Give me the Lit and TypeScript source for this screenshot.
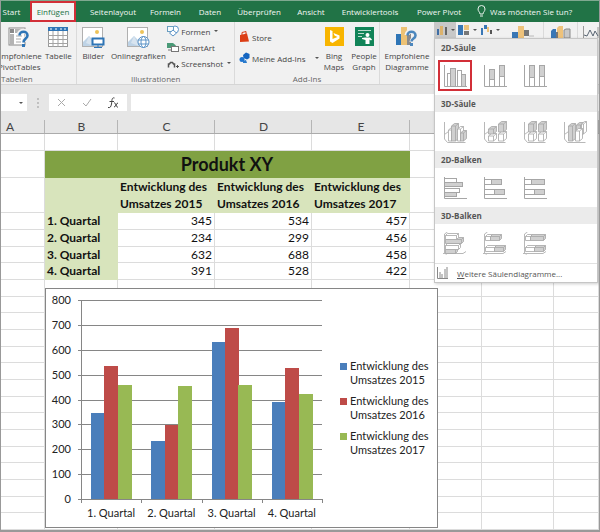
import { LitElement, html, svg, css, nothing } from "lit";
import { customElement } from "lit/decorators.js";

const TABS = ["Start", "Einfügen", "Seitenlayout", "Formeln", "Daten", "Überprüfen", "Ansicht", "Entwicklertools", "Power Pivot"];

const QUARTERS = ["1. Quartal", "2. Quartal", "3. Quartal", "4. Quartal"];
const SERIES = [
  { year: 2015, color: "#4a7ebb", values: [345, 234, 632, 391] },
  { year: 2016, color: "#be4b48", values: [534, 299, 688, 528] },
  { year: 2017, color: "#98b954", values: [457, 456, 458, 422] },
];

const icon = (w: number, h: number, body: unknown) =>
  html`<svg class="icon" width=${w} height=${h} viewBox="0 0 ${w} ${h}" aria-hidden="true">${body}</svg>`;

const pivotIcon = icon(22, 22, svg`
  <rect x="1" y="2" width="16" height="17" fill="#fff" stroke="#8a8a8a"/>
  <rect x="2" y="3" width="4" height="4" fill="#8a8a8a"/><rect x="7" y="3" width="10" height="4" fill="#b4b4b4"/>
  <rect x="2" y="8" width="4" height="11" fill="#b4b4b4"/>
  <path d="M8 10h6M8 13h5M8 16h5" stroke="#aaa"/>
  <path d="M11 9c0-5 9-5 9 0 0 4-4 3-4 7" fill="none" stroke="#f1f1f1" stroke-width="5"/>
  <path d="M11.500 9.500c0-5 8-5 8 0 0 3-4 3-4 7" fill="none" stroke="#2e75b6" stroke-width="2.600"/>
  <rect x="14" y="18" width="3" height="3" fill="#2e75b6"/>`);

const tableIcon = icon(22, 22, svg`
  <rect x="1.500" y="1.500" width="19" height="19" fill="#fff" stroke="#999"/>
  <rect x="1" y="1" width="20" height="4" fill="#2e75b6"/>
  <path d="M6 5v16M11 5v16M16 5v16M1 9.500h20M1 13.500h20M1 17.500h20" stroke="#a3a3a3"/>
  <path d="M3 3h2M8 3h2M13 3h2M17 3h2" stroke="#fff"/>`);

const pictureBase = svg`
  <rect x="1.500" y="1.500" width="20" height="19" fill="#fff" stroke="#b0b0b0"/>
  <circle cx="16" cy="6" r="2" fill="#edc35a"/>
  <path d="M2 20v-4l6-6 5 5v5z" fill="#bed3e6"/><path d="M8 10l-3 7 8 3z" fill="#d8e4ef"/>`;
const pictureIcon = icon(24, 22, svg`${pictureBase}
  <rect x="11.500" y="12.500" width="11" height="6" fill="#fff" stroke="#2e75b6" stroke-width="2"/>
  <path d="M17 19v2M13 21.500h8" stroke="#2e75b6"/>`);
const onlineIcon = icon(24, 22, svg`${pictureBase}
  <circle cx="17.500" cy="16" r="5.500" fill="#fff" stroke="#5b93c7"/>
  <ellipse cx="17.500" cy="16" rx="2.500" ry="5.500" fill="none" stroke="#5b93c7"/>
  <path d="M12.500 14h10M12.500 18h10" stroke="#5b93c7"/>`);

const shapesIcon = icon(12, 12, svg`
  <circle cx="8" cy="4.500" r="3.500" fill="#fff" stroke="#5b93c7"/>
  <rect x=".5" y="1.500" width="6" height="5" fill="#f8fbfd" stroke="#6a9ec0"/>
  <path d="M2.500 8l3.500-3 3.500 3-3.500 3z" fill="#fff" stroke="#5b93c7"/>`);
const smartIcon = icon(12, 12, svg`
  <path d="M0 2h6l3 2.500-3 2.500H0z" fill="#4a9a77"/><rect x="4.500" y="5.500" width="7" height="5" fill="#fff" stroke="#777"/>
  <path d="M1 9h3" stroke="#777"/>`);
const shotIcon = icon(12, 12, svg`
  <path d="M1.500 10.500V7h1L3.500 5.500h2L6.500 7h1v3.500" fill="none" stroke="#555" stroke-width="1.500"/>
  <path d="M9 9.500h3M10.500 8v3" stroke="#555"/>`);

const storeIcon = icon(11, 12, svg`
  <path d="M1 4l7-1.500 2 8L1 11z" fill="#dc3e15"/><path d="M3 4V1.500l4-1V3" fill="none" stroke="#dc3e15"/>`);
const addinIcon = icon(11, 12, svg`
  <path d="M4 3l3-2.500L10.500 2v4L8 7.500 4.500 6z" fill="#1565c0"/><circle cx="3" cy="7.500" r="2.500" fill="#1e74d0"/>
  <path d="M4 9l3-1 1 3H4z" fill="#2a7bcb"/>`);

const bingIcon = icon(19, 22, svg`
  <rect y="1" width="19" height="19" fill="#f8b500"/><path d="M5 4l2.500 1v8l5-2-3-1.500L8.500 7l6 2.500v3L7.500 17 5 15.500z" fill="#fff"/>`);
const peopleIcon = icon(19, 22, svg`
  <rect y="1" width="19" height="19" fill="#118458"/><path d="M3 4.500h13M3 7.500h6M3 10.500h4" stroke="#b9dccd"/>
  <circle cx="12.500" cy="9" r="2" fill="#fff"/><path d="M7 12l3-.5h5l2 2-1 1-1.500-1V18h-4v-4L7 13z" fill="#fff"/>`);

const recommendIcon = icon(22, 22, svg`
  <rect x="0" y="8" width="5" height="11" fill="#2e75b6"/><rect x="5" y="1" width="6" height="18" fill="#edc274"/>
  <rect x="11" y="5" width="4" height="14" fill="#8a8a8a"/>
  <path d="M11 9c0-5 9-5 9 0 0 4-4 3-4 7" fill="none" stroke="#f1f1f1" stroke-width="5"/>
  <path d="M11.500 9.500c0-5 8-5 8 0 0 3-4 3-4 6" fill="none" stroke="#4c87bd" stroke-width="2.600"/>
  <rect x="14" y="17" width="3" height="3" fill="#4c87bd"/>`);

const columnIcon = icon(12, 10, svg`<rect x="1" y="4" width="2" height="6" fill="#3f6ea5"/><rect x="4" y="1" width="3" height="9" fill="#dcb26c"/><rect x="9" y="2" width="2" height="8" fill="#666"/>`);
const treeIcon = icon(12, 10, svg`<rect width="5" height="10" fill="#3a77b5"/><rect x="6" width="5" height="5" fill="#eec27b"/><rect x="6" y="6" width="5" height="4" fill="#777"/>`);
const fallIcon = icon(12, 10, svg`<rect x="0" y="3" width="2" height="7" fill="#3a77b5"/><rect x="3" y="0" width="3" height="4" fill="#3a77b5"/><rect x="6" y="2" width="2" height="5" fill="#eec27b"/><rect x="9" y="5" width="2" height="4" fill="#555"/>`);
const mapsIcon = icon(22, 12, svg`<rect x="0" y="6" width="6" height="6" fill="#3a77b5"/><rect x="6" y="0" width="6" height="12" fill="#eec27b"/><rect x="12" y="4" width="5" height="6" fill="#777"/><path d="M17 10h5" stroke="#bbb"/>`);
const pivotChartIcon = icon(22, 12, svg`<path d="M1 12V5l2-2h3v9z" fill="#3a77b5"/><path d="M7 12V2l2-2h4v12z" fill="#eec27b"/><path d="M14 12V4l2-1h4v9z" fill="#c8c8c8" stroke="#8a8a8a"/><path d="M6 6h2v6H6z" fill="#777"/>`);
const lineIcon = icon(16, 12, svg`<path d="M.5 0v12M15 1v11" stroke="#999"/><path d="M1 9l3 1 3-6 3 6 2-5 3 5" fill="none" stroke="#596573"/>`);

const G = "#a6a6a6";
const FILL = "#d0d0d0";
const axes = svg`<path d="M1.500 1v21.500H24" fill="none" stroke=${G}/>`;
const box = (x: number, y: number, w: number, h: number, fill: string) =>
  svg`<rect x=${x + 0.5} y=${y + 0.5} width=${w} height=${h} fill=${fill} stroke=${G}/>`;
const vPrism = (x: number, y: number, w: number, bottom: number, fill: string) => svg`
  <path d="M${x + 0.5} ${y + 3}l3-2.500h${w}v${bottom - y - 3}l-3 2.500h${-w}z" fill=${fill} stroke=${G} stroke-width=".8"/>
  <path d="M${x + 0.5} ${y + 3}h${w}v${bottom - y - 3}M${x + w + 0.5} ${y + 3}l3-2.500" fill="none" stroke=${G} stroke-width=".8"/>`;
const hPrism = (x: number, y: number, w: number, fill: string) => svg`
  <path d="M${x + 0.5} ${y + 2.5}l2-2h${w}v4l-2 2h${-w}z" fill=${fill} stroke=${G} stroke-width=".8"/>
  <path d="M${x + 0.5} ${y + 2.5}h${w}v4M${x + w + 0.5} ${y + 2.5}l2-2" fill="none" stroke=${G} stroke-width=".8"/>`;
const axes3d = svg`<path d="M1.500 2v17M1.500 14.500l4-3M1.500 19l3 3.500h18" fill="none" stroke="#b8b8b8"/>`;
const axes3dBar = svg`<path d="M1.500 2v19l2 1.500M0 21.500h20l3-2M1.500 2l3-2" fill="none" stroke="#b8b8b8"/>`;

const chartIcon = (body: unknown) => icon(24, 24, body);

const GALLERY = [
  {
    title: "2D-Säule",
    items: [
      ["Gruppierte Säulen", chartIcon(svg`${axes}${box(4, 9, 3, 13, "#fff")}${box(7, 4, 5, 18, FILL)}${box(14, 6, 4, 16, "#fff")}${box(18, 10, 4, 12, FILL)}`)],
      ["Gestapelte Säulen", chartIcon(svg`${axes}${box(6, 14, 5, 8, "#fff")}${box(6, 5, 5, 10, FILL)}${box(16, 12, 5, 10, "#fff")}${box(16, 1, 5, 11, FILL)}`)],
      ["Gestapelte Säulen (100%)", chartIcon(svg`${axes}${box(6, 12, 5, 10, "#fff")}${box(6, 1, 5, 12, FILL)}${box(16, 12, 5, 10, "#fff")}${box(16, 1, 5, 11, FILL)}`)],
    ],
  },
  {
    title: "3D-Säule",
    items: [
      ["Gruppierte 3D-Säulen", chartIcon(svg`${axes3d}${vPrism(5, 7, 3, 21, "#fff")}${vPrism(8, 3, 4, 21, FILL)}${vPrism(14, 6, 3, 21, "#fff")}${vPrism(17, 10, 3, 21, FILL)}`)],
      ["Gestapelte 3D-Säulen", chartIcon(svg`${axes3d}${vPrism(5, 13, 5, 21, "#fff")}${vPrism(5, 6, 5, 14, FILL)}${vPrism(15, 11, 5, 21, "#fff")}${vPrism(15, 1, 5, 12, FILL)}`)],
      ["Gestapelte 3D-Säulen (100%)", chartIcon(svg`${axes3d}${vPrism(5, 11, 5, 21, "#fff")}${vPrism(5, 1, 5, 12, FILL)}${vPrism(15, 11, 5, 21, "#fff")}${vPrism(15, 1, 5, 12, FILL)}`)],
      ["3D-Säulen", chartIcon(svg`${axes3d}${vPrism(13, 2, 4, 16, FILL)}${vPrism(18, 1, 2, 14, "#fff")}${vPrism(5, 3, 4, 21, FILL)}${vPrism(12, 8, 4, 21, "#fff")}`)],
    ],
  },
  {
    title: "2D-Balken",
    items: [
      ["Gruppierte Balken", chartIcon(svg`${axes}${box(1, 2, 12, 4, "#fff")}${box(1, 6, 18, 4, FILL)}${box(1, 12, 15, 4, "#fff")}${box(1, 16, 12, 4, FILL)}`)],
      ["Gestapelte Balken", chartIcon(svg`${axes}${box(1, 3, 7, 5, "#fff")}${box(8, 3, 10, 5, FILL)}${box(1, 13, 10, 5, "#fff")}${box(11, 13, 10, 5, FILL)}`)],
      ["Gestapelte Balken (100%)", chartIcon(svg`${axes}${box(1, 3, 7, 5, "#fff")}${box(8, 3, 13, 5, FILL)}${box(1, 13, 10, 5, "#fff")}${box(11, 13, 10, 5, FILL)}`)],
    ],
  },
  {
    title: "3D-Balken",
    items: [
      ["Gruppierte 3D-Balken", chartIcon(svg`${axes3dBar}${hPrism(2, 15, 10, FILL)}${hPrism(2, 11, 13, "#fff")}${hPrism(2, 5, 16, FILL)}${hPrism(2, 1, 11, "#fff")}`)],
      ["Gestapelte 3D-Balken", chartIcon(svg`${axes3dBar}${hPrism(2, 2, 5, "#fff")}${hPrism(7, 2, 9, FILL)}${hPrism(2, 13, 9, "#fff")}${hPrism(11, 13, 9, FILL)}`)],
      ["Gestapelte 3D-Balken (100%)", chartIcon(svg`${axes3dBar}${hPrism(2, 2, 5, "#fff")}${hPrism(7, 2, 13, FILL)}${hPrism(2, 13, 9, "#fff")}${hPrism(11, 13, 9, FILL)}`)],
    ],
  },
] as const;

@customElement("chart-gallery")
export class ChartGallery extends LitElement {
  static styles = css`
    :host { display: block; box-sizing: border-box; background: #fff; border: 1px solid #c6c6c6; box-shadow: 1px 1px 3px #0003; }
    h2 { margin: 0; height: 17px; line-height: 17px; padding-left: 6px; background: #ebebeb; color: #555; font-size: 8px; font-weight: 700; }
    .row { display: flex; gap: 6px; height: 31px; padding: 4px 3px; }
    .item { width: 34px; height: 31px; box-sizing: border-box; display: grid; place-items: center; padding: 0; border: 0; background: none; }
    .item.selected { border: 2px solid #d22f38; }
    .icon { display: block; }
    .more { display: flex; align-items: center; gap: 9px; width: 100%; height: 19px; padding: 0 2px; border: 0; border-top: 1px solid #e1e1e1; background: none; font: inherit; font-size: 8px; color: #555; }
  `;

  render() {
    return html`
      ${GALLERY.map((group, g) => html`
        <h2>${group.title}</h2>
        <div class="row">
          ${group.items.map(([name, picture], i) => html`
            <button class="item ${g + i === 0 ? "selected" : ""}" aria-label=${name}>${picture}</button>`)}
        </div>`)}
      <button class="more">
        ${icon(11, 12, svg`<path d="M.5 0v11.500H11" fill="none" stroke="#888"/><path d="M3 5v6M5 7v4M8 2v9M10 0v11" stroke="#888"/>`)}
        <span><u>W</u>eitere Säulendiagramme...</span>
      </button>`;
  }
}

@customElement("sales-chart")
export class SalesChart extends LitElement {
  static styles = css`
    :host { display: flex; align-items: center; box-sizing: border-box; background: #fff; border: 1px solid #868686; font-family: Lato, "Liberation Sans", sans-serif; font-size: 11px; color: #222; }
    .plot { display: block; flex: none; }
    .plot text { font-size: 11px; fill: #222; }
    .line { stroke: #868686; }
    ul { list-style: none; margin: 0 0 0 14px; padding: 0; display: grid; gap: 7px; }
    li { display: flex; gap: 3px; line-height: 14px; }
    .key { flex: none; width: 7px; height: 7px; margin-top: 4px; }
  `;

  render() {
    const left = 35, right = 276, top = 11, bottom = 210;
    const y = (v: number) => Math.round(bottom - (v / 800) * (bottom - top));
    const step = (right - left) / QUARTERS.length;
    return html`
      <svg class="plot" width="280" height="238" viewBox="0 0 280 238" role="img" aria-label="Säulendiagramm Produkt XY">
        ${[0, 100, 200, 300, 400, 500, 600, 700, 800].map((v) => svg`
          <path class="line" d="M${left - 3} ${y(v) + 0.5}H${right}"/>
          <text x="25" y=${y(v) + 4} text-anchor="end">${v}</text>`)}
        ${QUARTERS.map((q, i) => svg`
          ${SERIES.map((s, k) => svg`<rect x=${Math.round(left + i * step + 10 + k * 13.4)} y=${y(s.values[i])} width="14" height=${bottom - y(s.values[i])} fill=${s.color}/>`)}
          <path class="line" d="M${Math.round(left + (i + 1) * step) + 0.5} ${bottom}v4"/>
          <text x=${left + (i + 0.5) * step} y="228" text-anchor="middle">${q}</text>`)}
        <path class="line" d="M${left + 0.5} ${top}V${bottom + 4}"/>
      </svg>
      <ul>
        ${SERIES.map((s) => html`
          <li><span class="key" style="background:${s.color}"></span><span>Entwicklung des<br />${`Umsatzes ${s.year}`}</span></li>`)}
      </ul>`;
  }
}

@customElement("app-root")
export class AppRoot extends LitElement {
  static styles = css`
    :host { display: block; font-family: "Open Sans", "Noto Sans", sans-serif; font-size: 8px; color: #444; }
    .frame { display: flex; flex-direction: column; box-sizing: border-box; min-height: 100vh; border: 1px solid #999; border-top-color: #7fa990; border-bottom-width: 2px; overflow: hidden; background: #fff; }
    button { font: inherit; color: inherit; background: none; border: 0; padding: 0; margin: 0; }
    .icon { display: block; flex: none; }

    .tabs { display: grid; grid-template-columns: 21px 62px 58px 47px 42px 56px 48px 70px 68px 1fr; align-items: center; height: 21px; background: #217346; }
    .tab { color: #f1f7f3; text-align: center; line-height: 17px; height: 21px; white-space: nowrap; }
    .tab.active { justify-self: center; width: 46px; box-sizing: border-box; background: #f5f5f5; border: 2px solid #d22f38; color: #217346; }
    .tell { display: flex; align-items: center; gap: 4px; padding-left: 4px; color: #f1f7f3; }

    .ribbon { display: flex; height: 63px; background: #f1f1f1; border-bottom: 1px solid #d5d5d5; box-sizing: border-box; }
    .group { display: flex; flex-direction: column; box-sizing: border-box; border-right: 1px solid #dadada; padding-bottom: 1px; }
    .body { display: flex; flex: 1; min-height: 0; }
    .caption { height: 8px; line-height: 8px; text-align: center; color: #666; }
    .tables { width: 77px; overflow: hidden; }
    .tables .body { justify-content: flex-end; padding-right: 2px; }
    .tables .caption { text-align: left; }
    .illus { width: 159px; }
    .addins { width: 145px; }
    .recommend { border-right: 0; width: 54px; }
    .big { display: flex; flex: none; flex-direction: column; align-items: center; gap: 2px; padding-top: 4px; line-height: 11px; white-space: nowrap; }
    .w22 { width: 32px; } .w30 { width: 30px; } .w46 { width: 46px; } .w54 { width: 54px; } .w58 { width: 58px; }
    .stack { display: flex; flex-direction: column; gap: 4px; padding-top: 3px; }
    .addins .stack { gap: 9px; padding: 9px 0 0 4px; width: 81px; }
    .small { display: flex; align-items: center; gap: 2px; height: 12px; white-space: nowrap; }
    .caret { width: 0; height: 0; border: 2px solid transparent; border-top-color: #555; border-bottom: 0; margin-left: 2px; }
    .push { margin-left: 7px; }

    .charts { display: flex; align-items: flex-start; flex: 1; }
    .anchor { position: relative; }
    .mini { display: flex; align-items: center; gap: 1px; height: 16px; padding: 0 2px; }
    .mini.open { background: #c8c8c8; width: 22px; box-sizing: border-box; }
    chart-gallery { position: absolute; top: 100%; left: 0; width: 164px; z-index: 2; }
    .wide { padding: 4px 0 0 10px; }
    .cell { border-left: 1px solid #dadada; height: 56px; margin-left: 9px; padding: 4px 0 40px 6px; }
    .spark { border-left: 1px solid #dadada; height: 56px; margin-left: 5px; padding: 4px 0 40px 5px; }

    .formula { display: flex; align-items: center; height: 27px; padding-top: 8px; box-sizing: border-box; background: #e6e6e6; }
    .box { display: flex; align-items: center; height: 17px; background: #fff; }
    .name { width: 26px; justify-content: flex-end; }
    .name .caret { margin-right: 4px; }
    .dots { width: 22px; display: flex; justify-content: center; }
    .tools { width: 78px; margin-right: 4px; justify-content: space-around; }
    .input { flex: 1; min-width: 0; border: 0; padding: 0 4px; font: inherit; }

    .sheet { position: relative; flex: 1; }
    table { width: 100%; table-layout: fixed; border-collapse: separate; border-spacing: 0; font-family: Lato, "Liberation Sans", sans-serif; font-size: 12px; color: #111; }
    th, td { box-sizing: border-box; padding: 0 2px; border: 0 solid #dcdcdc; border-width: 0 1px 1px 0; height: 17px; line-height: 16px; overflow: hidden; white-space: nowrap; }
    td { text-align: right; }
    th { text-align: left; font-weight: 700; }
    .letters th { height: 22px; background: linear-gradient(#b5b5b5, #b5b5b5) right bottom / 1px 13px no-repeat #e6e6e6; border-width: 0 0 1px 0; border-color: #ababab; padding: 8px 0 0; text-align: center; font-weight: 400; line-height: 12px; color: #444; }
    .letters .first { text-align: left; padding-left: 5px; }
    .title { height: 27px; }
    .title .head { height: 27px; background: #80a143; border-color: #80a143; text-align: center; font-size: 18px; line-height: 26px; }
    .years .green { height: 35px; white-space: normal; line-height: 17px; }
    .green { background: #d8e4bc; border-color: #d8e4bc; }
    .short td, .short th { height: 16px; line-height: 15px; }
    .c-a { width: 44px; } .c-b { width: 73px; } .c-m { width: 97px; } .c-e { width: 98px; } .c-f { width: 72px; }
    sales-chart { position: absolute; left: 44px; top: 176px; width: 393px; height: 240px; }
  `;

  private blanks(n: number) {
    return Array.from({ length: n }, () => html`<td></td>`);
  }

  render() {
    const caret = html`<span class="caret"></span>`;
    return html`
      <div class="frame">
        <nav class="tabs">
          ${TABS.map((t, i) => html`<button class="tab ${i === 1 ? "active" : ""}">${t}</button>`)}
          <div class="tell">
            ${icon(9, 13, svg`<path d="M3 9C3 7 1 6.500 1 4a3.500 3.500 0 0 1 7 0C8 6.500 6 7 6 9zM3 11h3" fill="none" stroke="#e9f2ec"/>`)}
            <span>Was möchten Sie tun?</span>
          </div>
        </nav>

        <div class="ribbon">
          <section class="group tables">
            <div class="body">
              <button class="big w46">${pivotIcon}<span>Empfohlene<br />PivotTables</span></button>
              <button class="big w22">${tableIcon}<span>Tabelle</span></button>
            </div>
            <div class="caption">Tabellen</div>
          </section>
          <section class="group illus">
            <div class="body">
              <button class="big w22">${pictureIcon}<span>Bilder</span></button>
              <button class="big w58">${onlineIcon}<span>Onlinegrafiken</span></button>
              <div class="stack">
                <button class="small">${shapesIcon}<span>Formen</span>${caret}</button>
                <button class="small">${smartIcon}<span>SmartArt</span></button>
                <button class="small">${shotIcon}<span>Screenshot</span>${caret}</button>
              </div>
            </div>
            <div class="caption">Illustrationen</div>
          </section>
          <section class="group addins">
            <div class="body">
              <div class="stack">
                <button class="small">${storeIcon}<span>Store</span></button>
                <button class="small">${addinIcon}<span>Meine Add-Ins</span><span class="caret push"></span></button>
              </div>
              <button class="big w30">${bingIcon}<span>Bing<br />Maps</span></button>
              <button class="big w30">${peopleIcon}<span>People<br />Graph</span></button>
            </div>
            <div class="caption">Add-Ins</div>
          </section>
          <section class="group recommend">
            <button class="big w54">${recommendIcon}<span>Empfohlene<br />Diagramme</span></button>
          </section>
          <section class="charts">
            <div class="anchor">
              <button class="mini open" aria-label="Säulendiagramm einfügen">${columnIcon}${caret}</button>
              <chart-gallery></chart-gallery>
            </div>
            <button class="mini" aria-label="Hierarchiediagramm">${treeIcon}${caret}</button>
            <button class="mini" aria-label="Wasserfalldiagramm">${fallIcon}${caret}</button>
            <button class="wide" aria-label="Karten">${mapsIcon}</button>
            <button class="cell" aria-label="PivotChart">${pivotChartIcon}</button>
            <button class="spark" aria-label="Sparklines">${lineIcon}</button>
          </section>
        </div>

        <div class="formula">
          <div class="box name">${caret}</div>
          <div class="dots">${icon(2, 10, svg`<path d="M1 0v10" stroke="#999" stroke-dasharray="2"/>`)}</div>
          <div class="box tools">
            ${icon(9, 9, svg`<path d="M1 1l7 7M8 1L1 8" stroke="#aaa"/>`)}
            ${icon(10, 9, svg`<path d="M1 5l3 3 5-7" fill="none" stroke="#aaa"/>`)}
            ${icon(11, 12, svg`<path d="M6.500 1C3.500 0 4 4 3.500 7S2 11 0 10.500M1.500 4.500H6M6 6c2-1 2 5 4 4M10 6c-2 0-2 4-4 4" fill="none" stroke="#444"/>`)}
          </div>
          <input class="box input" aria-label="Bearbeitungsleiste" />
        </div>

        <div class="sheet">
          <table>
            <colgroup>
              <col class="c-a" /><col class="c-b" /><col class="c-m" /><col class="c-m" /><col class="c-e" /><col class="c-f" /><col class="c-f" /><col />
            </colgroup>
            <thead>
              <tr class="letters"><th class="first">A</th>${["B", "C", "D", "E", "F", "G", "H"].map((l) => html`<th>${l}</th>`)}</tr>
            </thead>
            <tbody>
              <tr>${this.blanks(8)}</tr>
              <tr class="title"><td></td><th class="head" colspan="4">Produkt XY</th>${this.blanks(3)}</tr>
              <tr class="years"><td></td><th class="green"></th>
                ${SERIES.map((s) => html`<th class="green">Entwicklung des<br />${`Umsatzes ${s.year}`}</th>`)}${this.blanks(3)}</tr>
              ${Array.from({ length: 19 }, (_, i) => html`
                <tr class=${i % 3 === 2 ? "short" : nothing}>
                  <td></td>
                  ${i < 4
                    ? html`<th class="green">${QUARTERS[i]}</th>${SERIES.map((s) => html`<td>${s.values[i]}</td>`)}`
                    : this.blanks(4)}
                  ${this.blanks(3)}
                </tr>`)}
            </tbody>
          </table>
          <sales-chart></sales-chart>
        </div>
      </div>`;
  }
}
